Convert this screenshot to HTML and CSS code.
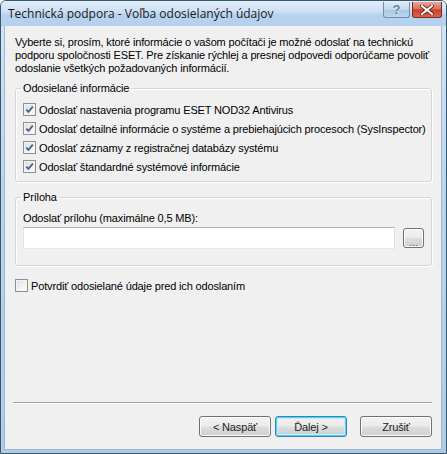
FILE: index.html
```html
<!DOCTYPE html>
<html lang="sk">
<head>
  <meta charset="UTF-8" />
  <title>Technická podpora - Voľba odosielaných údajov</title>
  <link rel="stylesheet" href="styles.css">
</head>
<body>

  <div class="window">
    <div class="titlebar">
      <span class="title">Technická podpora - Voľba odosielaných údajov</span>
      <div class="caption-buttons">
        <span class="cap-btn help">?</span>
        <span class="cap-btn close">
          <svg width="14" height="10" viewBox="0 0 14 10">
            <path d="M2 1 L12 9 M12 1 L2 9" stroke="#5a1b12" stroke-width="3.6" stroke-linecap="square" />
            <path d="M2 1 L12 9 M12 1 L2 9" stroke="#ffffff" stroke-width="2" stroke-linecap="square" />
          </svg>
        </span>
      </div>
    </div>

    <div class="client">
      <p class="intro">Vyberte si, prosím, ktoré informácie o vašom počítači je možné odoslať na technickú podporu spoločnosti ESET. Pre získanie rýchlej a presnej odpovedi odporúčame povoliť odoslanie všetkých požadovaných informácií.</p>

      <fieldset class="group">
        <legend>Odosielané informácie</legend>
        <label class="check"><span class="box checked"></span>Odoslať nastavenia programu ESET NOD32 Antivirus</label>
        <label class="check"><span class="box checked"></span>Odoslať detailné informácie o systéme a prebiehajúcich procesoch (SysInspector)</label>
        <label class="check"><span class="box checked"></span>Odoslať záznamy z registračnej databázy systému</label>
        <label class="check"><span class="box checked"></span>Odoslať štandardné systémové informácie</label>
      </fieldset>

      <fieldset class="group attach">
        <legend>Príloha</legend>
        <div class="field-label">Odoslať prílohu (maximálne 0,5 MB):</div>
        <div class="file-row">
          <div class="textbox"></div>
          <button class="btn browse">...</button>
        </div>
      </fieldset>

      <label class="check confirm"><span class="box"></span>Potvrdiť odosielané údaje pred ich odoslaním</label>

      <div class="footer">
        <div class="separator"></div>
        <div class="buttons">
          <button class="btn">&lt; Naspäť</button>
          <button class="btn default">Ďalej &gt;</button>
          <button class="btn cancel">Zrušiť</button>
        </div>
      </div>
    </div>
  </div>

</body>
</html>
```

FILE: styles.css
```css
:root {
  --frame: #b4d0ec;
  --frame-dark: #36586f;
  --face: #f0f0f0;
  --text: #000000;
  --group-border: #d5d5d5;
}

* {
  box-sizing: border-box;
}

body {
  margin: 0;
  font-family: 'Liberation Sans', Arial, sans-serif;
  font-size: 11px;
  color: var(--text);
  background: #ffffff;
}

.window {
  width: 447px;
  height: 454px;
  display: flex;
  flex-direction: column;
  border: 1px solid var(--frame-dark);
  border-radius: 6px 6px 0 0;
  background: linear-gradient(180deg, #d6e6f6 0%, #bcd5ee 40%, #aecbe9 100%);
  overflow: hidden;
}

.titlebar {
  height: 25px;
  display: flex;
  align-items: flex-start;
  justify-content: space-between;
  padding: 0 4px 0 7px;
  background: linear-gradient(180deg, #e3eef9 0%, #cadff3 45%, #b7d2ee 55%, #b5d1ed 100%);
}

.title {
  font-family: 'Open Sans', 'Liberation Sans', sans-serif;
  font-size: 12px;
  line-height: 25px;
  color: #1a1a1a;
}

.caption-buttons {
  display: flex;
  gap: 2px;
  padding-top: 1px;
}

.cap-btn {
  height: 16px;
  display: flex;
  align-items: center;
  justify-content: center;
  border: 1px solid #6d8fb0;
  border-radius: 0 0 3px 3px;
  border-top: none;
}

.help {
  width: 27px;
  background: linear-gradient(180deg, #dbe9f7 0%, #c2d8ee 50%, #a9c6e4 51%, #bcd6ef 100%);
  color: #6a7f94;
  font-weight: bold;
  font-size: 13px;
  text-shadow: 0 0 2px #ffffff;
}

.close {
  width: 30px;
  border-color: #7a2a20;
  background: linear-gradient(180deg, #eba596 0%, #d9735f 45%, #c8432b 52%, #d8654d 100%);
}

.client {
  flex: 1;
  display: flex;
  flex-direction: column;
  margin: 0 4px 3px 3px;
  background: var(--face);
  border: 1px solid #9fb7cf;
  border-top: none;
}

.intro {
  margin: 10px 8px 0 10px;
  line-height: 13px;
  letter-spacing: -0.15px;
}

.group {
  margin: 7px 9px 0 10px;
  padding: 0 5px 5px 5px;
  border: 1px solid var(--group-border);
  border-radius: 3px;
  box-shadow: inset 1px 1px 0 #ffffff, 1px 1px 0 #ffffff;
}

.group legend {
  padding: 0 2px;
  line-height: 13px;
  letter-spacing: -0.15px;
}

.group legend + .check {
  margin-top: 5px;
}

.check {
  display: flex;
  align-items: center;
  gap: 3px;
  height: 19px;
  letter-spacing: -0.15px;
}

.group .check {
  margin-left: 2px;
}

.box {
  width: 13px;
  height: 13px;
  flex: none;
  border: 1px solid #8e8f8f;
  background: linear-gradient(135deg, #dcdcdc 0%, #f4f4f4 60%, #ffffff 100%);
  box-shadow: inset 0 0 0 1px #f4f4f4;
}

.box.checked {
  background:
    url("data:image/svg+xml,%3Csvg xmlns='http://www.w3.org/2000/svg' width='11' height='11' viewBox='0 0 11 11'%3E%3Cpath d='M2.3 5.6 L4.4 7.9 L8.8 2.6' fill='none' stroke='%234c6284' stroke-width='1.8'/%3E%3C/svg%3E") center / 11px 11px no-repeat,
    linear-gradient(135deg, #d8dde3 0%, #eef0f3 60%, #ffffff 100%);
}

.attach {
  margin-top: 9px;
  padding-bottom: 16px;
}

.field-label {
  margin: 8px 0 0 2px;
  line-height: 13px;
  letter-spacing: -0.15px;
}

.file-row {
  display: flex;
  align-items: center;
  gap: 8px;
  margin: 2px 0 0 2px;
}

.textbox {
  width: 372px;
  height: 22px;
  background: #ffffff;
  border: 1px solid #abadb3;
  border-bottom-color: #e3e9ef;
  border-left-color: #e2e3ea;
  border-right-color: #dbdfe6;
}

.btn {
  font-family: inherit;
  font-size: 11px;
  letter-spacing: -0.15px;
  color: #1e1e1e;
  padding: 0;
  border: 1px solid #707070;
  border-radius: 3px;
  background: linear-gradient(180deg, #f2f2f2 0%, #ebebeb 48%, #dddddd 52%, #cfcfcf 100%);
  box-shadow: inset 0 0 0 1px #fcfcfc;
}

.browse {
  width: 21px;
  height: 20px;
  line-height: 20px;
  padding-top: 3px;
  color: #666666;
}

.confirm {
  margin: 10px 0 0 10px;
}

.footer {
  margin-top: auto;
  padding-bottom: 12px;
}

.separator {
  margin: 0 9px 0 8px;
  border-top: 1px solid #a0a0a0;
  border-bottom: 1px solid #ffffff;
}

.buttons {
  display: flex;
  justify-content: flex-end;
  padding: 12px 9px 0 0;
}

.buttons .btn {
  width: 72px;
  height: 21px;
}

.buttons .btn + .btn {
  margin-left: 4px;
}

.buttons .cancel {
  margin-left: 13px !important;
}

.btn.default {
  border-color: #3c7fb1;
  box-shadow: inset 0 0 0 1px #48d8fb, inset 0 0 0 2px #c6ecfb;
}
```
